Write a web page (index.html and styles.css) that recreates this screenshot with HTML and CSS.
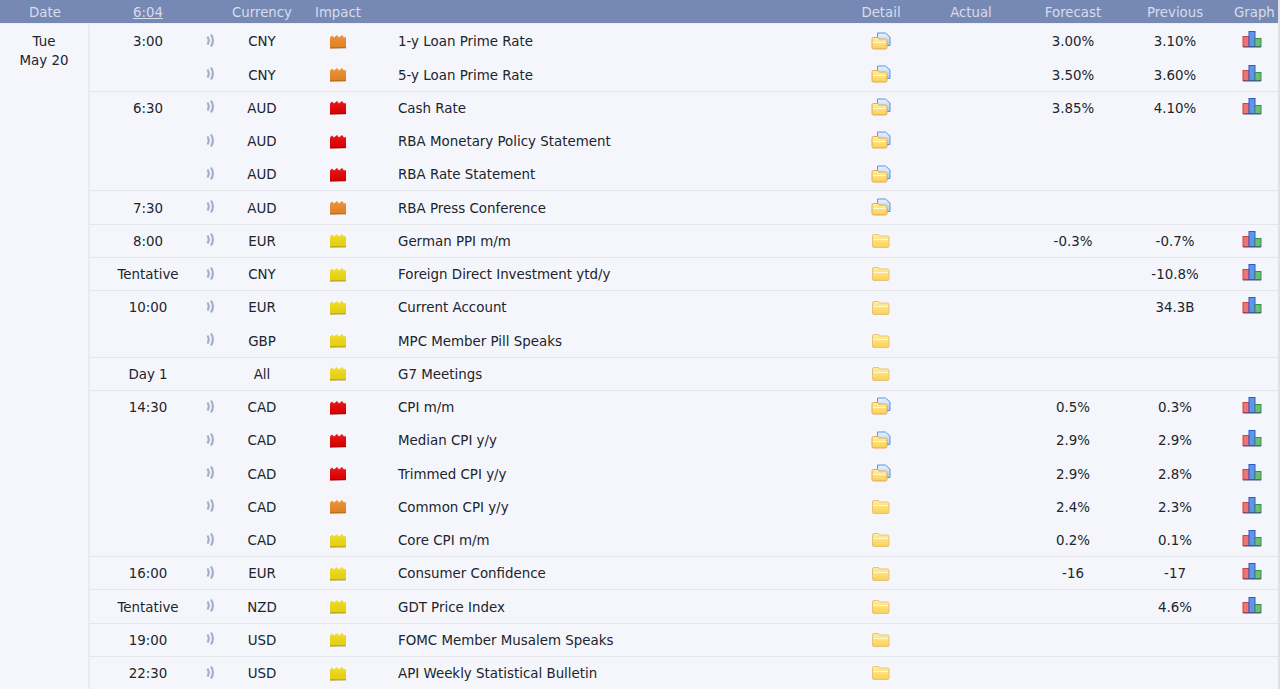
FILE: index.html
```html
<!DOCTYPE html>
<html lang="en">
<head>
<meta charset="utf-8">
<title>Calendar</title>
<link rel="stylesheet" href="styles.css">
</head>
<body>
<svg class="defs" width="0" height="0" aria-hidden="true">
  <defs>
    <linearGradient id="fy" x1="0" y1="0" x2="0" y2="1"><stop offset="0" stop-color="#fff0a0"/><stop offset="1" stop-color="#fbd052"/></linearGradient>
    <linearGradient id="doc" x1="0" y1="0" x2="0" y2="1"><stop offset="0" stop-color="#eaf3ff"/><stop offset="1" stop-color="#a6caf4"/></linearGradient>
    <linearGradient id="im" x1="0" y1="0" x2="0" y2="1"><stop offset="0" stop-color="#fff" stop-opacity=".12"/><stop offset="1" stop-color="#000" stop-opacity=".06"/></linearGradient>
    <symbol id="folder" viewBox="0 0 20 18">
      <path d="M1.500 5v10q0 1.500 1.500 1.500h13.500q1.500 0 1.500-1.500V6.500q0-1.500-1.500-1.500H8.500L7.500 3.500H3Q1.500 3.500 1.500 5z" fill="url(#fy)" stroke="#e6c27e"/>
      <path d="M2.500 8.500h14.500" stroke="#fff8d0"/>
    </symbol>
    <symbol id="folderdoc" viewBox="0 0 20 18">
      <path d="M6.500 8V1h8l4.500 4v8.500h-5z" fill="url(#doc)" stroke="#5f93d8"/>
      <path d="M1 8v7.500q0 1.500 1.500 1.500h12q1.500 0 1.500-1.500V8.500Q16 7 14.500 7H8L7 5.500H2.500Q1 5.500 1 7z" fill="url(#fy)" stroke="#e3a85a"/>
      <path d="M2 10.500h13" stroke="#fff8d0"/>
    </symbol>
    <symbol id="graph" viewBox="0 0 20 18">
      <rect x="1" y="6.500" width="6" height="10" fill="#ef7474" stroke="#d44343"/>
      <rect x="7" y="1.500" width="6" height="15" fill="#5f95ec" stroke="#2a5dc6"/>
      <rect x="13" y="8.500" width="6" height="8" fill="#6fbd75" stroke="#35914a"/>
      <path d="M1 17h18" stroke="#4e5280"/>
    </symbol>
    <symbol id="sound" viewBox="0 0 10 15">
      <path d="M1.500 3.500q2.500 4 0 8M5 1.500q3.800 6 0 12" fill="none" stroke="#a3aec8" stroke-width="2.200"/>
    </symbol>
    <symbol id="impact" viewBox="0 0 18 15">
      <path d="M1 14.500V3.500l2-2 2 2 3-2.500 2 2.500 3-2.500 2 2.500 2-.5v11z" fill="currentColor"/>
      <path d="M1 14.500V3.500l2-2 2 2 3-2.500 2 2.500 3-2.500 2 2.500 2-.5v11z" fill="url(#im)"/>
      <path d="M1 14h16" stroke="#000" stroke-opacity=".3"/>
    </symbol>
  </defs>
</svg>
<table class="calendar">
  <colgroup>
    <col class="c-date"><col class="c-time"><col class="c-sound"><col class="c-cur"><col class="c-imp"><col class="c-title"><col class="c-det"><col class="c-act"><col class="c-fc"><col class="c-prev"><col class="c-graph">
  </colgroup>
  <thead>
    <tr><th>Date</th><th class="clock">6:04</th><th></th><th>Currency</th><th>Impact</th><th></th><th>Detail</th><th>Actual</th><th>Forecast</th><th>Previous</th><th>Graph</th></tr>
  </thead>
  <tbody>
    <tr><td class="date" rowspan="20">Tue<br>May 20</td><td>3:00</td><td><svg class="i-sound"><use href="#sound"/></svg></td><td>CNY</td><td class="med"><svg class="i-imp"><use href="#impact"/></svg></td><td class="title">1-y Loan Prime Rate</td><td><svg class="i-det"><use href="#folderdoc"/></svg></td><td></td><td>3.00%</td><td>3.10%</td><td><svg class="i-graph"><use href="#graph"/></svg></td></tr>
    <tr><td></td><td><svg class="i-sound"><use href="#sound"/></svg></td><td>CNY</td><td class="med"><svg class="i-imp"><use href="#impact"/></svg></td><td class="title">5-y Loan Prime Rate</td><td><svg class="i-det"><use href="#folderdoc"/></svg></td><td></td><td>3.50%</td><td>3.60%</td><td><svg class="i-graph"><use href="#graph"/></svg></td></tr>
    <tr class="grp"><td>6:30</td><td><svg class="i-sound"><use href="#sound"/></svg></td><td>AUD</td><td class="high"><svg class="i-imp"><use href="#impact"/></svg></td><td class="title">Cash Rate</td><td><svg class="i-det"><use href="#folderdoc"/></svg></td><td></td><td>3.85%</td><td>4.10%</td><td><svg class="i-graph"><use href="#graph"/></svg></td></tr>
    <tr><td></td><td><svg class="i-sound"><use href="#sound"/></svg></td><td>AUD</td><td class="high"><svg class="i-imp"><use href="#impact"/></svg></td><td class="title">RBA Monetary Policy Statement</td><td><svg class="i-det"><use href="#folderdoc"/></svg></td><td></td><td></td><td></td><td></td></tr>
    <tr><td></td><td><svg class="i-sound"><use href="#sound"/></svg></td><td>AUD</td><td class="high"><svg class="i-imp"><use href="#impact"/></svg></td><td class="title">RBA Rate Statement</td><td><svg class="i-det"><use href="#folderdoc"/></svg></td><td></td><td></td><td></td><td></td></tr>
    <tr class="grp"><td>7:30</td><td><svg class="i-sound"><use href="#sound"/></svg></td><td>AUD</td><td class="med"><svg class="i-imp"><use href="#impact"/></svg></td><td class="title">RBA Press Conference</td><td><svg class="i-det"><use href="#folderdoc"/></svg></td><td></td><td></td><td></td><td></td></tr>
    <tr class="grp"><td>8:00</td><td><svg class="i-sound"><use href="#sound"/></svg></td><td>EUR</td><td class="low"><svg class="i-imp"><use href="#impact"/></svg></td><td class="title">German PPI m/m</td><td><svg class="i-det"><use href="#folder"/></svg></td><td></td><td>-0.3%</td><td>-0.7%</td><td><svg class="i-graph"><use href="#graph"/></svg></td></tr>
    <tr class="grp"><td>Tentative</td><td><svg class="i-sound"><use href="#sound"/></svg></td><td>CNY</td><td class="low"><svg class="i-imp"><use href="#impact"/></svg></td><td class="title">Foreign Direct Investment ytd/y</td><td><svg class="i-det"><use href="#folder"/></svg></td><td></td><td></td><td>-10.8%</td><td><svg class="i-graph"><use href="#graph"/></svg></td></tr>
    <tr class="grp"><td>10:00</td><td><svg class="i-sound"><use href="#sound"/></svg></td><td>EUR</td><td class="low"><svg class="i-imp"><use href="#impact"/></svg></td><td class="title">Current Account</td><td><svg class="i-det"><use href="#folder"/></svg></td><td></td><td></td><td>34.3B</td><td><svg class="i-graph"><use href="#graph"/></svg></td></tr>
    <tr><td></td><td><svg class="i-sound"><use href="#sound"/></svg></td><td>GBP</td><td class="low"><svg class="i-imp"><use href="#impact"/></svg></td><td class="title">MPC Member Pill Speaks</td><td><svg class="i-det"><use href="#folder"/></svg></td><td></td><td></td><td></td><td></td></tr>
    <tr class="grp"><td>Day 1</td><td></td><td>All</td><td class="low"><svg class="i-imp"><use href="#impact"/></svg></td><td class="title">G7 Meetings</td><td><svg class="i-det"><use href="#folder"/></svg></td><td></td><td></td><td></td><td></td></tr>
    <tr class="grp"><td>14:30</td><td><svg class="i-sound"><use href="#sound"/></svg></td><td>CAD</td><td class="high"><svg class="i-imp"><use href="#impact"/></svg></td><td class="title">CPI m/m</td><td><svg class="i-det"><use href="#folderdoc"/></svg></td><td></td><td>0.5%</td><td>0.3%</td><td><svg class="i-graph"><use href="#graph"/></svg></td></tr>
    <tr><td></td><td><svg class="i-sound"><use href="#sound"/></svg></td><td>CAD</td><td class="high"><svg class="i-imp"><use href="#impact"/></svg></td><td class="title">Median CPI y/y</td><td><svg class="i-det"><use href="#folderdoc"/></svg></td><td></td><td>2.9%</td><td>2.9%</td><td><svg class="i-graph"><use href="#graph"/></svg></td></tr>
    <tr><td></td><td><svg class="i-sound"><use href="#sound"/></svg></td><td>CAD</td><td class="high"><svg class="i-imp"><use href="#impact"/></svg></td><td class="title">Trimmed CPI y/y</td><td><svg class="i-det"><use href="#folderdoc"/></svg></td><td></td><td>2.9%</td><td>2.8%</td><td><svg class="i-graph"><use href="#graph"/></svg></td></tr>
    <tr><td></td><td><svg class="i-sound"><use href="#sound"/></svg></td><td>CAD</td><td class="med"><svg class="i-imp"><use href="#impact"/></svg></td><td class="title">Common CPI y/y</td><td><svg class="i-det"><use href="#folder"/></svg></td><td></td><td>2.4%</td><td>2.3%</td><td><svg class="i-graph"><use href="#graph"/></svg></td></tr>
    <tr><td></td><td><svg class="i-sound"><use href="#sound"/></svg></td><td>CAD</td><td class="low"><svg class="i-imp"><use href="#impact"/></svg></td><td class="title">Core CPI m/m</td><td><svg class="i-det"><use href="#folder"/></svg></td><td></td><td>0.2%</td><td>0.1%</td><td><svg class="i-graph"><use href="#graph"/></svg></td></tr>
    <tr class="grp"><td>16:00</td><td><svg class="i-sound"><use href="#sound"/></svg></td><td>EUR</td><td class="low"><svg class="i-imp"><use href="#impact"/></svg></td><td class="title">Consumer Confidence</td><td><svg class="i-det"><use href="#folder"/></svg></td><td></td><td>-16</td><td>-17</td><td><svg class="i-graph"><use href="#graph"/></svg></td></tr>
    <tr class="grp"><td>Tentative</td><td><svg class="i-sound"><use href="#sound"/></svg></td><td>NZD</td><td class="low"><svg class="i-imp"><use href="#impact"/></svg></td><td class="title">GDT Price Index</td><td><svg class="i-det"><use href="#folder"/></svg></td><td></td><td></td><td>4.6%</td><td><svg class="i-graph"><use href="#graph"/></svg></td></tr>
    <tr class="grp"><td>19:00</td><td><svg class="i-sound"><use href="#sound"/></svg></td><td>USD</td><td class="low"><svg class="i-imp"><use href="#impact"/></svg></td><td class="title">FOMC Member Musalem Speaks</td><td><svg class="i-det"><use href="#folder"/></svg></td><td></td><td></td><td></td><td></td></tr>
    <tr class="grp"><td>22:30</td><td><svg class="i-sound"><use href="#sound"/></svg></td><td>USD</td><td class="low"><svg class="i-imp"><use href="#impact"/></svg></td><td class="title">API Weekly Statistical Bulletin</td><td><svg class="i-det"><use href="#folder"/></svg></td><td></td><td></td><td></td><td></td></tr>
  </tbody>
</table>
</body>
</html>
```
FILE: styles.css
```css
html, body {
  margin: 0;
  height: 100%;
  overflow: hidden;
  background: #dfe1e8;
}
.defs {
  position: absolute;
}
.calendar {
  width: 1278px;
  table-layout: fixed;
  border-collapse: separate;
  border-spacing: 0;
  font-family: "DejaVu Sans", Verdana, sans-serif;
  font-size: 13.4px;
  color: #20242c;
  background: #f5f6fb;
}
.c-date { width: 90px; }
.c-time { width: 116px; }
.c-sound { width: 8px; }
.c-cur { width: 96px; }
.c-imp { width: 56px; }
.c-title { width: 484px; }
.c-det { width: 62px; }
.c-act { width: 118px; }
.c-fc { width: 86px; }
.c-prev { width: 118px; }
.c-graph { width: 44px; }
thead th {
  height: 24px;
  padding: 2px 0 0;
  box-sizing: border-box;
  background: #7689b4;
  border-bottom: 1px solid #eceef4;
  color: #d6dded;
  font-weight: 400;
  font-size: 13.3px;
  text-align: center;
  overflow: hidden;
  white-space: nowrap;
}
th.clock {
  text-decoration: underline;
}
tbody td {
  height: 33.26px;
  padding: 1.6px 0 0;
  border-top: 1px solid transparent;
  text-align: center;
  vertical-align: middle;
  white-space: nowrap;
  box-sizing: border-box;
}
thead th:last-child,
tbody td:last-child {
  padding-right: 8px;
}
tbody td.date {
  vertical-align: top;
  padding-top: 7px;
  line-height: 19px;
  border-right: 2px solid #e9ebf1;
}
tr.grp td {
  border-top-color: #e4e6ec;
}
tbody td.title {
  text-align: left;
  padding-left: 32px;
}
svg {
  display: inline-block;
  vertical-align: middle;
}
.i-sound { width: 10px; height: 15px; margin-top: -4px; }
.i-imp { width: 18px; height: 15px; margin-top: -2px; }
.i-det { width: 20px; height: 18px; margin-top: -3px; }
.i-graph { width: 20px; height: 18px; margin-top: -6px; }
.high { color: #e60000; }
.med { color: #ee8a26; }
.low { color: #f2dc12; }
```
